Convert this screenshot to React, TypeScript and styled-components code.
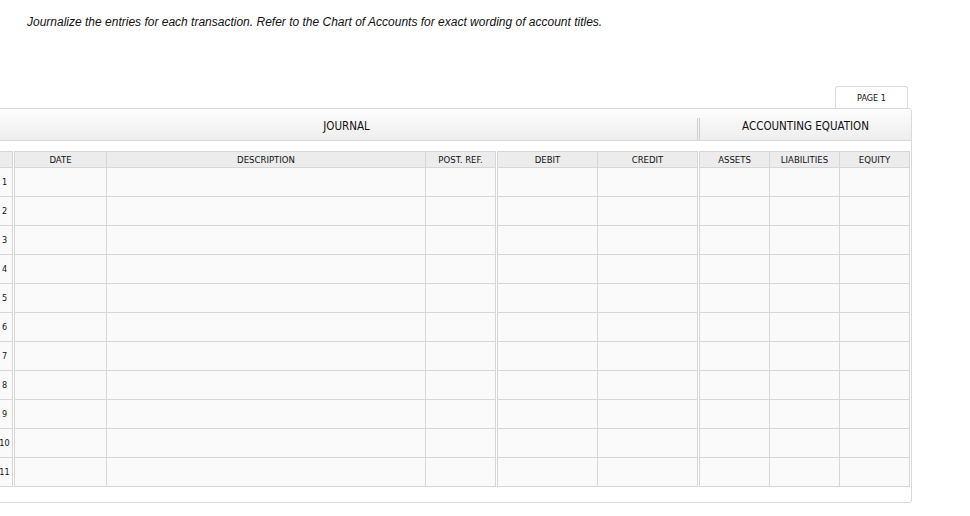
import styled, { createGlobalStyle } from "styled-components";

interface Column {
  label: string;
  width: number;
}

const groups: Column[][] = [
  [{ label: "", width: 15 }],
  [
    { label: "DATE", width: 91 },
    { label: "DESCRIPTION", width: 318 },
    { label: "POST. REF.", width: 69 },
  ],
  [
    { label: "DEBIT", width: 99 },
    { label: "CREDIT", width: 99 },
  ],
  [
    { label: "ASSETS", width: 69 },
    { label: "LIABILITIES", width: 69 },
    { label: "EQUITY", width: 69 },
  ],
];

const rowCount = 11;

const App = () => {
  return (
    <>
      <GlobalStyle />
      <SPage>
        <SInstruction>
          Journalize the entries for each transaction. Refer to the Chart of Accounts for exact
          wording of account titles.
        </SInstruction>
        <SSheet>
          <STabRow>
            <STab>PAGE 1</STab>
          </STabRow>
          <SPanel>
            <SHeaderBar>
              <SJournalTitle>JOURNAL</SJournalTitle>
              <SDivider />
              <SEquationTitle>ACCOUNTING EQUATION</SEquationTitle>
            </SHeaderBar>
            <SGroups>
              {groups.map((cols, g) => (
                <SGroup key={g} $cols={cols.map((c) => `${c.width}px`).join(" ")}>
                  {cols.map((c, i) => (
                    <SHeadCell key={`h${i}`}>{c.label}</SHeadCell>
                  ))}
                  {Array.from({ length: rowCount }).map((_, r) =>
                    cols.map((c, i) => (
                      <SCell key={`${r}-${i}`}>{g === 0 ? r + 1 : ""}</SCell>
                    ))
                  )}
                </SGroup>
              ))}
            </SGroups>
          </SPanel>
        </SSheet>
      </SPage>
    </>
  );
};

const GlobalStyle = createGlobalStyle`
  html, body {
    margin: 0;
    padding: 0;
    background: #fff;
    overflow: hidden;
  }
`;

const SPage = styled.div`
  width: 970px;
  height: 516px;
  padding-top: 15px;
  box-sizing: border-box;
`;

const SInstruction = styled.div`
  padding-left: 27px;
  font-family: "Liberation Sans", Arial, sans-serif;
  font-style: italic;
  font-size: 12px;
  line-height: 14px;
  color: #111;
`;

const SSheet = styled.div`
  width: 917px;
  margin-left: -5px;
  margin-top: 57px;
  font-family: "DejaVu Sans Condensed", "DejaVu Sans", sans-serif;
  font-stretch: condensed;
  color: #333;
`;

const STabRow = styled.div`
  display: flex;
  justify-content: flex-end;
  padding-right: 4px;
`;

const STab = styled.div`
  width: 71px;
  height: 21px;
  border: 1px solid #d9d9d9;
  border-bottom: none;
  border-radius: 3px 3px 0 0;
  background: #fff;
  display: flex;
  align-items: center;
  justify-content: center;
  font-size: 9px;
  color: #111;
`;

const SPanel = styled.div`
  border: 1px solid #d9d9d9;
  border-radius: 0 3px 3px 3px;
  padding: 0 1px 15px 0;
`;

const SHeaderBar = styled.div`
  display: flex;
  height: 31px;
  border-bottom: 1px solid #d9d9d9;
  background: linear-gradient(to bottom, #fdfdfd, #eeeeee);
  border-radius: 0 3px 0 0;
  margin-right: -1px;
`;

const SJournalTitle = styled.div`
  flex: 0 0 701px;
  display: flex;
  align-items: center;
  justify-content: center;
  padding-top: 2px;
  font-size: 11.5px;
  color: #111;
`;

const SDivider = styled.div`
  flex: 0 0 1px;
  margin-top: 9px;
  border-left: 1px solid #cfcfcf;
  border-right: 1px solid #cfcfcf;
`;

const SEquationTitle = styled.div`
  flex: 1;
  display: flex;
  align-items: center;
  justify-content: center;
  padding-top: 2px;
  font-size: 11.5px;
  color: #111;
`;

const SGroups = styled.div`
  display: flex;
  gap: 1px;
  margin-top: 10px;
`;

const SGroup = styled.div<{ $cols: string }>`
  display: grid;
  grid-template-columns: ${(p) => p.$cols};
  grid-template-rows: 15px repeat(${rowCount}, 28px);
  gap: 1px;
  background: #d6d6d6;
  border: 1px solid #d6d6d6;
`;

const SHeadCell = styled.div`
  background: #ececec;
  display: flex;
  align-items: center;
  justify-content: center;
  font-size: 9.5px;
  color: #111;
  white-space: nowrap;
`;

const SCell = styled.div`
  background: #fafafa;
  display: flex;
  align-items: center;
  justify-content: center;
  font-size: 9px;
  color: #111;
`;

export default App;
